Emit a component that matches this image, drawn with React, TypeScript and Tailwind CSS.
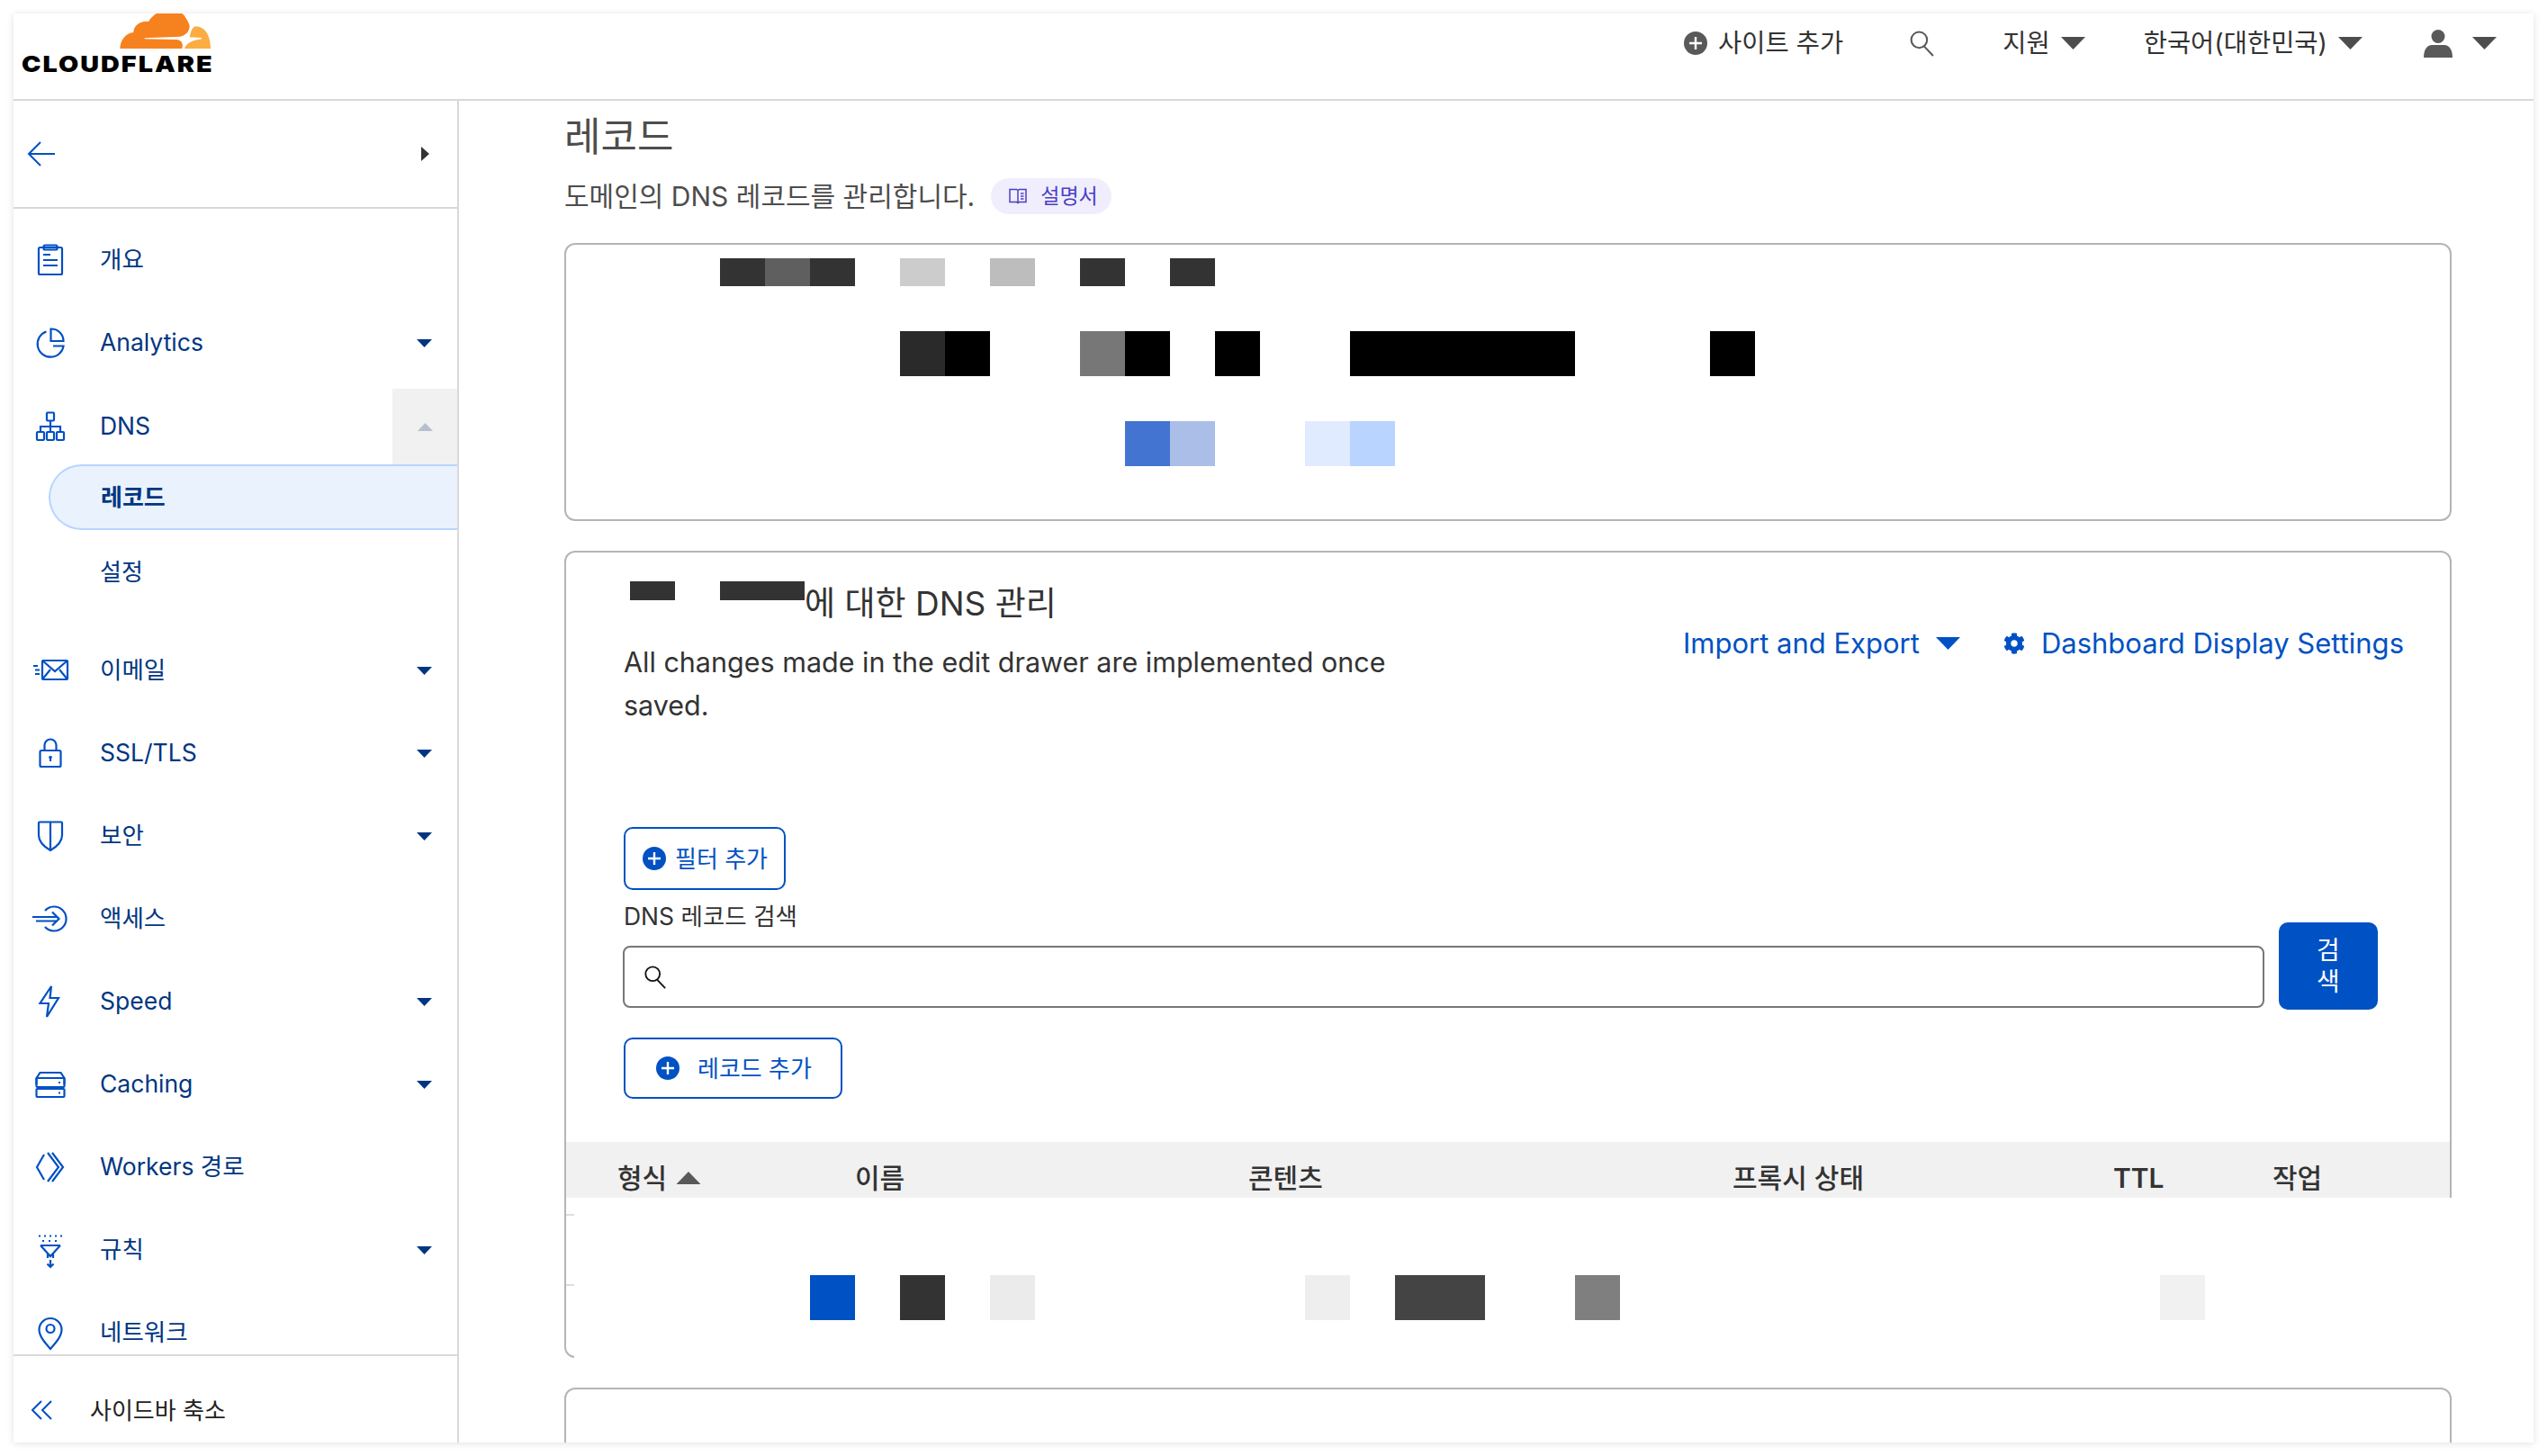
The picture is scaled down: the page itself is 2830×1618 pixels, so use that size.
import { FaCog } from "react-icons/fa"
import type { ReactNode } from "react"

const font = { fontFamily: 'Inter, "Noto Sans CJK KR", sans-serif' }

const Caret = ({ className = "", up = false }: { className?: string; up?: boolean }) => (
    <svg viewBox="0 0 27 14" className={className} fill="currentColor">
        <polygon points={up ? "13.5,0 27,14 0,14" : "0,0 27,0 13.5,14"} />
    </svg>
)

const PlusCircle = ({ className = "" }: { className?: string }) => (
    <svg viewBox="0 0 26 26" className={className}>
        <circle cx="13" cy="13" r="13" fill="currentColor" />
        <path d="M13 6v14M6 13h14" stroke="#fff" strokeWidth="2.4" />
    </svg>
)

const SearchIcon = ({ className = "" }: { className?: string }) => (
    <svg viewBox="0 0 28 28" className={className} fill="none" stroke="currentColor" strokeWidth="2">
        <circle cx="11" cy="10" r="8.5" />
        <path d="M16.5 17l9.5 10" />
    </svg>
)

const Icon = ({ children }: { children: ReactNode }) => (
    <svg viewBox="0 0 36 36" className="w-[36px] h-[36px] shrink-0 overflow-visible text-[#0051c3]" fill="none" stroke="currentColor" strokeWidth="2.2">
        {children}
    </svg>
)

const icons: Record<string, ReactNode> = {
    overview: <>
        <rect x="5" y="4" width="26" height="30" rx="1.5" />
        <rect x="10.5" y="1.5" width="15" height="5" rx="1.5" />
        <path d="M10 12h8M10 18h16M10 24h16" />
    </>,
    analytics: <>
        <path d="M13.5 5.5A14.5 14.5 0 1 0 32.5 21.5H21" />
        <path d="M18.5 2.5A13.5 13.5 0 0 1 32.5 16H18.5Z" />
    </>,
    dns: <>
        <rect x="14" y="2.5" width="8" height="9" rx="1" />
        <path d="M18 11.5V24M7 24v-6h22v6" />
        <rect x="3" y="24" width="8" height="9" rx="1" />
        <rect x="14" y="24" width="8" height="9" rx="1" />
        <rect x="25" y="24" width="8" height="9" rx="1" />
    </>,
    email: <>
        <rect x="9" y="7" width="28" height="21" rx="1" />
        <path d="M9 7l14 12L37 7M9 28l9-11M37 28l-9-11" />
        <path d="M-1 13h5M1 17.5h5M1 22h5" />
    </>,
    lock: <>
        <rect x="6.5" y="15" width="23" height="18" rx="1.5" />
        <path d="M11.5 15V9a6.5 6.5 0 0 1 13 0v6" />
        <circle cx="18" cy="22.5" r="1.8" fill="currentColor" stroke="none" />
        <path d="M18 23v4" />
    </>,
    shield: <>
        <path d="M6 2.500h24a1 1 0 0 1 1 1V17c0 7-6 13-13 17C11 30 5 24 5 17V3.500a1 1 0 0 1 1-1Z" />
        <path d="M18 2.500V34" />
    </>,
    access: <>
        <path d="M12 9A13.500 13.500 0 1 1 12 27" />
        <path d="M-2 16H26M2 20.500H26M20 10.500l7.500 7.500-7.500 7.500" />
    </>,
    speed: <>
        <path d="M19 1l-1.500 13H27L14 35l2-15H6.500L19 1Z" />
    </>,
    caching: <>
        <path d="M2.500 18v-7l4-6h23l4 6v7" />
        <rect x="2.500" y="11" width="31" height="10" rx="1" />
        <rect x="2.500" y="23" width="31" height="9" rx="1" />
        <path d="M27 16h2M27 27.500h2" />
    </>,
    workers: <>
        <path d="M11 4L3 18l8 14" />
        <path d="M15 2l12 16-12 16M20 2l12 16-12 16" />
    </>,
    rules: <>
        <path d="M6 2.500h2M12 2.500h2M18 2.500h2M24 2.500h2M30 2.500h2M10 8h2M17 8h2M24 8h2" transform="translate(-1)" />
        <path d="M7 13h22M7 13l11 12 11-12M15 22v5M21 22v5M18 29v8M14.500 33.500L18 37l3.500-3.500" />
    </>,
    network: <>
        <path d="M18 36C11 28 5.500 21.500 5.500 14.500a12.500 12.500 0 0 1 25 0C30.500 21.500 25 28 18 36Z" />
        <circle cx="18" cy="13.500" r="4.500" />
    </>,
}

const NavItem = ({ icon, label, caret = true }: { icon: string; label: string; caret?: boolean }) => (
    <div className="flex items-center h-[92px] pl-[23px] pr-[28px] shrink-0">
        <Icon>{icons[icon]}</Icon>
        <span className="ml-[37px] flex-1 text-[26.5px] text-[#003681]">{label}</span>
        {caret && <Caret className="w-[17px] h-[9px] text-[#003681]" />}
    </div>
)

// redacted areas in the source shot, one cell per 50px
const Cell = ({ className }: { className: string }) => <div className={`w-[50px] h-full shrink-0 ${className}`} />

const Sidebar = () => (
    <aside className="w-[495px] shrink-0 h-full flex flex-col border-r-2 border-[#d9d9d9] bg-white">
        <div className="h-[120px] shrink-0 flex items-center justify-between border-b-2 border-[#d9d9d9] pl-[15px] pr-[31px]">
            <svg viewBox="0 0 32 28" className="w-[32px] h-[28px] text-[#0051c3]" fill="none" stroke="currentColor" strokeWidth="2">
                <path d="M31 14H2M15 1L2 14l13 13" />
            </svg>
            <svg viewBox="0 0 9 16" className="w-[9px] h-[16px] text-[#333]" fill="currentColor"><polygon points="0,0 9,8 0,16" /></svg>
        </div>
        <nav className="flex-1 min-h-0 overflow-hidden pt-[11px]">
            <NavItem icon="overview" label="개요" caret={false} />
            <NavItem icon="analytics" label="Analytics" />
            <div className="flex items-stretch h-[84px] mt-[5px] pl-[23px]">
                <div className="flex items-center flex-1">
                    <Icon>{icons.dns}</Icon>
                    <span className="ml-[37px] text-[26.5px] text-[#003681]">DNS</span>
                </div>
                <div className="w-[72px] bg-[#f1f1f1] flex items-center justify-center">
                    <Caret up className="w-[17px] h-[9px] text-[#b5bfce]" />
                </div>
            </div>
            <div className="ml-[39px] h-[73px] flex items-center pl-[56px] bg-[#eaf2fe] border-2 border-r-0 border-[#b9d4ff] rounded-l-[37px] text-[26px] font-semibold text-[#003681]">레코드</div>
            <div className="h-[92px] mb-[18px] flex items-center pl-[96px] text-[26px] text-[#003681]">설정</div>
            <NavItem icon="email" label="이메일" />
            <NavItem icon="lock" label="SSL/TLS" />
            <NavItem icon="shield" label="보안" />
            <NavItem icon="access" label="액세스" caret={false} />
            <NavItem icon="speed" label="Speed" />
            <NavItem icon="caching" label="Caching" />
            <NavItem icon="workers" label="Workers 경로" caret={false} />
            <NavItem icon="rules" label="규칙" />
            <NavItem icon="network" label="네트워크" caret={false} />
        </nav>
        <div className="h-[98px] shrink-0 border-t-2 border-[#d9d9d9] flex items-center pl-[20px] pt-[24px]">
            <svg viewBox="0 0 23 22" className="w-[23px] h-[22px] text-[#0051c3]" fill="none" stroke="currentColor" strokeWidth="2">
                <path d="M11 1L1 11l10 10M22 1L12 11l10 10" />
            </svg>
            <span className="ml-[42px] text-[26px] text-[#222]">사이드바 축소</span>
        </div>
    </aside>
)

const Header = () => (
    <header className="h-[97px] shrink-0 flex justify-between border-b-2 border-[#d9d9d9] bg-white">
        <div className="pl-[9px] flex flex-col">
            <svg viewBox="72 45 630 117" className="w-[210px] h-[39px]">
                <path fill="#f6821f" d="M400 162C400 135 420 110 445 108C445 85 470 68 495 72C505 55 520 45 530 40H600C620 50 632 85 632 85C632 105 620 118 600 122L482 127V130L590 132C610 136 610 150 607 162Z" />
                <path fill="#fbad41" d="M615 162C620 145 640 135 672 130V126L632 124C636 105 640 88 655 88C685 90 702 120 702 162Z" />
            </svg>
            <span className="mt-[5px] text-[25px] leading-[25px] font-black tracking-[1.76px] scale-x-[1.15] origin-left text-black">CLOUDFLARE</span>
        </div>
        <div className="h-[66px] flex items-center pr-[41px] text-[28.5px] text-[#333]">
            <PlusCircle className="w-[26px] h-[26px] text-[#595959]" />
            <span className="ml-[12px]">사이트 추가</span>
            <SearchIcon className="ml-[73px] w-[29px] h-[29px] text-[#595959]" />
            <span className="ml-[75px]">지원</span>
            <Caret className="ml-[12px] w-[27px] h-[14px] text-[#4d4d4d]" />
            <span className="ml-[65px]">한국어(대한민국)</span>
            <Caret className="ml-[12px] w-[27px] h-[14px] text-[#4d4d4d]" />
            <svg viewBox="0 0 32 31" className="ml-[68px] w-[32px] h-[31px] text-[#595959]" fill="currentColor">
                <ellipse cx="16" cy="7.500" rx="7.500" ry="7.500" />
                <path d="M0 31c0-9 4-14 9-14h14c5 0 9 5 9 14Z" />
            </svg>
            <Caret className="ml-[22px] w-[27px] h-[14px] text-[#4d4d4d]" />
        </div>
    </header>
)

const DnsCard = () => (
    <section className="relative h-[897px] shrink-0 mt-[33px] border-2 border-[#b5b5b5] rounded-[12px] bg-white flex flex-col">
        <div className="flex justify-between items-start pr-[51px]">
            <div>
                <div className="flex items-start pt-[31px] pl-[71px] text-[37px] leading-[52px] text-[#333]">
                    <div className="w-[50px] h-[21px] mt-[1px] bg-[#333]" />
                    <div className="w-[94px] h-[21px] mt-[1px] ml-[50px] bg-[#333]" />
                    <span>에 대한 DNS 관리</span>
                </div>
                <p className="mt-[15px] ml-[64px] w-[880px] text-[30.5px] leading-[48px] text-[#333]">All changes made in the edit drawer are implemented once saved.</p>
            </div>
            <div className="mt-[77px] h-[48px] flex items-center text-[31px] text-[#0051c3]">
                <span>Import and Export</span>
                <Caret className="ml-[18px] w-[27px] h-[14px]" />
                <FaCog className="ml-[48px] w-[24px] h-[24px]" />
                <span className="ml-[18px]">Dashboard Display Settings</span>
            </div>
        </div>
        <button className="ml-[64px] mt-[111px] w-[180px] h-[70px] flex items-center pl-[19px] border-2 border-[#0051c3] rounded-[10px] text-[26px] text-[#0051c3]">
            <PlusCircle className="w-[26px] h-[26px] shrink-0" />
            <span className="ml-[10px]">필터 추가</span>
        </button>
        <label className="ml-[64px] mt-[10px] h-[40px] flex items-center text-[26.5px] text-[#333]">DNS 레코드 검색</label>
        <div className="-mt-[14px] ml-[63px] h-[97px] flex items-end">
            <div className="w-[1824px] h-[69px] mb-[2px] flex items-center pl-[20px] border-2 border-[#777] rounded-[8px]">
                <SearchIcon className="w-[28px] h-[26px] text-[#111]" />
            </div>
            <button className="ml-[16px] w-[110px] h-[97px] flex flex-col items-center justify-center bg-[#0051c3] rounded-[10px] text-[28px] leading-[35px] text-white">
                <span>검</span>
                <span>색</span>
            </button>
        </div>
        <button className="ml-[64px] mt-[31px] w-[243px] h-[68px] flex items-center pl-[34px] border-2 border-[#0051c3] rounded-[10px] text-[26px] text-[#0051c3]">
            <PlusCircle className="w-[26px] h-[26px] shrink-0" />
            <span className="ml-[20px]">레코드 추가</span>
        </button>
        <div className="mt-[48px] h-[62px] shrink-0 flex items-end pb-[2px] pl-[57px] bg-[#f1f1f1] text-[30px] leading-[40px] font-medium text-[#333]">
            <div className="w-[264px] flex items-center">
                <span>형식</span>
                <Caret up className="ml-[10px] w-[28px] h-[14px] text-[#595959]" />
            </div>
            <div className="w-[437px]">이름</div>
            <div className="w-[538px]">콘텐츠</div>
            <div className="w-[423px]">프록시 상태</div>
            <div className="w-[177px] font-semibold">TTL</div>
            <div>작업</div>
        </div>
        <div className="flex-1 flex -mb-[4px] -mr-[24px] min-h-0">
            <div className="w-[9px] shrink-0 pt-[18px]">
                <div className="h-[2px] bg-[#dedede]" />
                <div className="h-[2px] mt-[76px] bg-[#dedede]" />
            </div>
            <div className="relative flex-1 bg-white pt-[86px] pl-[262px]">
                <div className="flex h-[50px]">
                    <Cell className="bg-[#0051c3]" />
                    <Cell className="ml-[50px] bg-[#333]" />
                    <Cell className="ml-[50px] bg-[#ebebeb]" />
                    <Cell className="ml-[300px] bg-[#eee]" />
                    <Cell className="ml-[50px] bg-[#444]" />
                    <Cell className="bg-[#444]" />
                    <Cell className="ml-[100px] bg-[#7f7f7f]" />
                    <Cell className="ml-[600px] bg-[#f1f1f1]" />
                </div>
            </div>
        </div>
    </section>
)

export default function App() {
    return (
        <div className="w-[2830px] h-[1618px] p-[15px] bg-white" style={font}>
            <div className="w-[2800px] h-[1588px] flex flex-col overflow-hidden bg-white shadow-[0_1px_8px_rgba(0,0,0,0.12)]">
                <Header />
                <div className="flex flex-1 min-h-0">
                    <Sidebar />
                    <main className="flex-1 min-w-0 h-full overflow-hidden pl-[117px] pr-[91px] flex flex-col">
                        <h1 className="h-[80px] shrink-0 flex items-center text-[44px] font-normal text-[#4d4d4d]">레코드</h1>
                        <div className="h-[40px] shrink-0 mt-[6px] flex items-center text-[30px] text-[#4d4d4d]">
                            <span>도메인의 DNS 레코드를 관리합니다.</span>
                            <span className="ml-[18px] h-[40px] w-[134px] flex items-center pl-[20px] rounded-full bg-[#f0eefc] text-[23px] text-[#4b3fc4]">
                                <svg viewBox="0 0 20 20" className="w-[20px] h-[20px] shrink-0" fill="none" stroke="currentColor" strokeWidth="1.500">
                                    <path d="M1 2.500h7.500l1.500 1 1.500-1H19v14h-7.500l-1.500 1-1.500-1H1ZM10 3.500v13M13 7h3.500M13 10h3.500M13 13h3.500" />
                                </svg>
                                <span className="ml-[15px]">설명서</span>
                            </span>
                        </div>
                        <section className="h-[309px] shrink-0 mt-[32px] border-2 border-[#b5b5b5] rounded-[12px] bg-white pl-[171px]">
                            <div className="flex h-[31px] mt-[15px]">
                                <Cell className="bg-[#333]" />
                                <Cell className="bg-[#5f5f5f]" />
                                <Cell className="bg-[#333]" />
                                <Cell className="ml-[50px] bg-[#ccc]" />
                                <Cell className="ml-[50px] bg-[#bdbdbd]" />
                                <Cell className="ml-[50px] bg-[#333]" />
                                <Cell className="ml-[50px] bg-[#333]" />
                            </div>
                            <div className="flex h-[50px] mt-[50px] pl-[200px]">
                                <Cell className="bg-[#2a2a2a]" />
                                <Cell className="bg-black" />
                                <Cell className="ml-[100px] bg-[#777]" />
                                <Cell className="bg-black" />
                                <Cell className="ml-[50px] bg-black" />
                                <div className="w-[250px] h-full ml-[100px] bg-black" />
                                <Cell className="ml-[150px] bg-black" />
                            </div>
                            <div className="flex h-[50px] mt-[50px] pl-[450px]">
                                <Cell className="bg-[#4374d1]" />
                                <Cell className="bg-[#aabee8]" />
                                <Cell className="ml-[100px] bg-[#e0ebff]" />
                                <Cell className="bg-[#b9d4ff]" />
                            </div>
                        </section>
                        <DnsCard />
                        <section className="h-[200px] shrink-0 mt-[33px] border-2 border-[#b5b5b5] rounded-[12px] bg-white" />
                    </main>
                </div>
            </div>
        </div>
    )
}
